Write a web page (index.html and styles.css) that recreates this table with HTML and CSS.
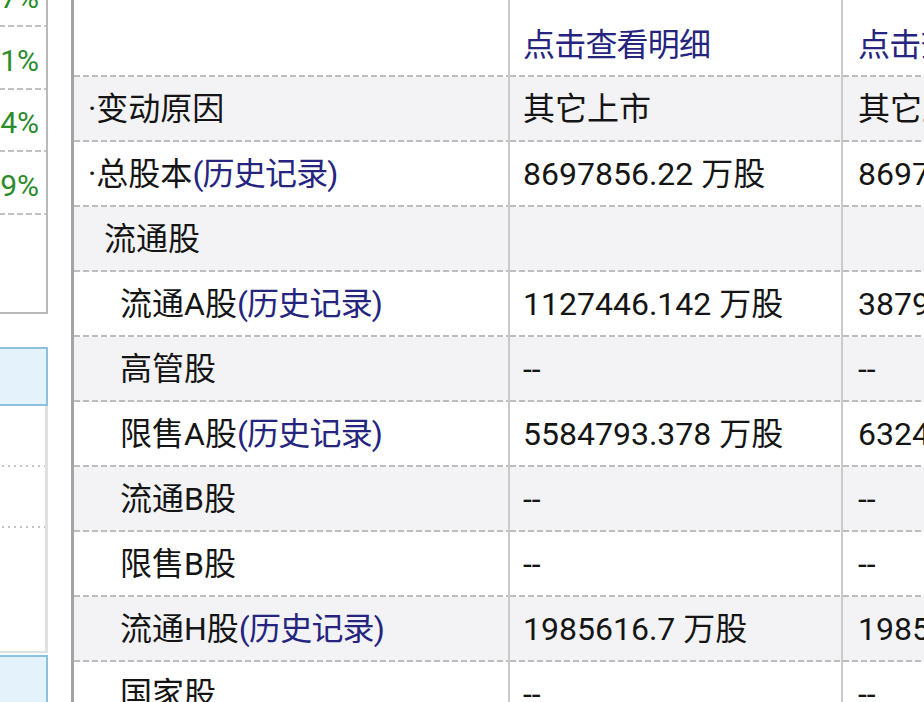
FILE: index.html
```html
<!DOCTYPE html>
<html lang="zh-CN">
<head>
<meta charset="utf-8">
<title>股本结构</title>
<link rel="stylesheet" href="styles.css">
</head>
<body>
<div class="page">
  <aside class="side">
    <div class="pct-box">
      <div class="pct-row first">-0.37%</div>
      <div class="pct-row">-0.21%</div>
      <div class="pct-row">-1.14%</div>
      <div class="pct-row">-2.39%</div>
    </div>
    <div class="tab-blue"></div>
    <div class="list-box">
      <div class="list-row"></div>
      <div class="list-row"></div>
      <div class="list-row"></div>
    </div>
    <div class="tab-blue tall"></div>
  </aside>

  <main class="grid">
    <div class="row head">
      <div class="cell c1"></div>
      <div class="cell c2"><a class="link">点击查看明细</a></div>
      <div class="cell c3"><a class="link">点击查看明细</a></div>
    </div>
    <div class="row alt">
      <div class="cell c1 lv1">·变动原因</div>
      <div class="cell c2">其它上市</div>
      <div class="cell c3">其它上市</div>
    </div>
    <div class="row">
      <div class="cell c1 lv1">·总股本<a class="link">(历史记录)</a></div>
      <div class="cell c2">8697856.22 万股</div>
      <div class="cell c3">8697856.22 万股</div>
    </div>
    <div class="row alt">
      <div class="cell c1 lv2">流通股</div>
      <div class="cell c2"></div>
      <div class="cell c3"></div>
    </div>
    <div class="row">
      <div class="cell c1 lv3">流通A股<a class="link">(历史记录)</a></div>
      <div class="cell c2">1127446.142 万股</div>
      <div class="cell c3">3879813.142 万股</div>
    </div>
    <div class="row alt">
      <div class="cell c1 lv3">高管股</div>
      <div class="cell c2">--</div>
      <div class="cell c3">--</div>
    </div>
    <div class="row">
      <div class="cell c1 lv3">限售A股<a class="link">(历史记录)</a></div>
      <div class="cell c2">5584793.378 万股</div>
      <div class="cell c3">6324162.378 万股</div>
    </div>
    <div class="row alt">
      <div class="cell c1 lv3">流通B股</div>
      <div class="cell c2">--</div>
      <div class="cell c3">--</div>
    </div>
    <div class="row">
      <div class="cell c1 lv3">限售B股</div>
      <div class="cell c2">--</div>
      <div class="cell c3">--</div>
    </div>
    <div class="row alt">
      <div class="cell c1 lv3">流通H股<a class="link">(历史记录)</a></div>
      <div class="cell c2">1985616.7 万股</div>
      <div class="cell c3">1985616.7 万股</div>
    </div>
    <div class="row">
      <div class="cell c1 lv3">国家股</div>
      <div class="cell c2">--</div>
      <div class="cell c3">--</div>
    </div>
  </main>
</div>
</body>
</html>
```

FILE: styles.css
```css
html, body {
  margin: 0;
  padding: 0;
  background: #ffffff;
  overflow: hidden;
}

body {
  width: 924px;
  height: 702px;
  font-family: Roboto, "Noto Sans CJK SC", sans-serif;
  color: #151515;
}

.page {
  display: flex;
  align-items: flex-start;
  width: 924px;
  height: 702px;
  overflow: hidden;
}

/* ---------- left side panel (mostly cut off) ---------- */
.side {
  flex: none;
  width: 148px;
  margin-left: -100px;
  margin-right: 23px;
  display: flex;
  flex-direction: column;
}

.pct-box {
  height: 314px;
  box-sizing: border-box;
  border-right: 2px solid #b9b9b9;
  border-bottom: 2px solid #b9b9b9;
  overflow: hidden;
}

.pct-row {
  height: 62.6px;
  box-sizing: border-box;
  padding-right: 7px;
  padding-top: 4px;
  display: flex;
  align-items: center;
  justify-content: flex-end;
  font-size: 30px;
  color: #2a8c2a;
  background-image: repeating-linear-gradient(90deg, #c2c2c2 0 6px, transparent 6px 9px);
  background-size: 100% 2px;
  background-repeat: no-repeat;
  background-position: left bottom;
}

.pct-row.first {
  margin-top: -35.6px;
}

.tab-blue {
  margin-top: 33px;
  height: 59px;
  box-sizing: border-box;
  background: #e4f2fb;
  border: 2px solid #8bc1dd;
  border-left: none;
}

.tab-blue.tall {
  margin-top: 2px;
  height: 120px;
}

.list-box {
  height: 247px;
  box-sizing: border-box;
  border-right: 3px solid #e0e0e0;
  border-bottom: 2px solid #e0e0e0;
}

.list-row {
  height: 61px;
  background-image: repeating-linear-gradient(90deg, #c4c4c4 0 2px, transparent 2px 6px);
  background-size: 100% 2px;
  background-repeat: no-repeat;
  background-position: left bottom;
}

.list-row:last-child {
  background-image: none;
}

/* ---------- main table ---------- */
.grid {
  flex: none;
  border-left: 3px solid #a4a4a4;
  display: flex;
  flex-direction: column;
}

.row {
  display: flex;
  height: 65px;
  background-color: #ffffff;
}

.row.alt {
  background-color: #f3f3f5;
}

.row.head {
  height: 77px;
}

.cell {
  flex: none;
  box-sizing: border-box;
  height: 100%;
  display: flex;
  align-items: center;
  padding-bottom: 2px;
  font-size: 32px;
  line-height: 40px;
  white-space: nowrap;
  border-right: 2px solid #cacaca;
  background-image: repeating-linear-gradient(90deg, #bdbdbd 0 6px, transparent 6px 9px);
  background-size: 100% 2px;
  background-repeat: no-repeat;
  background-position: left bottom;
}

.row.head .cell {
  align-items: flex-end;
  padding-bottom: 12px;
}

.c1 {
  width: 436px;
  padding-left: 14px;
}

.c2 {
  width: 333px;
  padding-left: 13px;
}

.c3 {
  width: 400px;
  padding-left: 15px;
}

.c1.lv2 {
  padding-left: 30px;
}

.c1.lv3 {
  padding-left: 46px;
}

.link {
  color: #25257f;
  text-decoration: none;
  letter-spacing: -0.8px;
}
```
